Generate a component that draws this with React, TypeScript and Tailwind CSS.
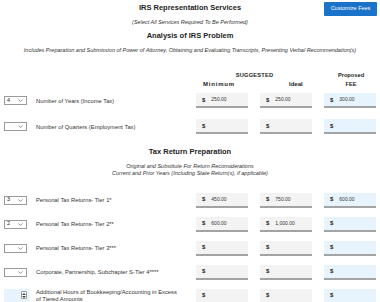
import React from "react";

type Row = {
  qty: string;
  label: string[];
  min: string;
  ideal: string;
  fee: string;
  spinner?: boolean;
};

const analysisRows: Row[] = [
  { qty: "4", label: ["Number of Years (Income Tax)"], min: "250.00", ideal: "250.00", fee: "300.00" },
  { qty: "", label: ["Number of Quarters (Employment Tax)"], min: "", ideal: "", fee: "" },
];

const returnRows: Row[] = [
  { qty: "3", label: ["Personal Tax Returns- Tier 1*"], min: "450.00", ideal: "750.00", fee: "600.00" },
  { qty: "2", label: ["Personal Tax Returns- Tier 2**"], min: "600.00", ideal: "1,000.00", fee: "" },
  { qty: "", label: ["Personal Tax Returns- Tier 3***"], min: "", ideal: "", fee: "" },
  { qty: "", label: ["Corporate, Partnership, Subchapter S-Tier 4****"], min: "", ideal: "", fee: "" },
  {
    qty: "",
    label: ["Additional Hours of Bookkeeping/Accounting in Excess", "of Tiered Amounts"],
    min: "",
    ideal: "",
    fee: "",
    spinner: true,
  },
];

function QtySelect({ value }: { value: string }) {
  return (
    <div className="flex h-[9px] w-[23px] items-center justify-between border border-[#9a9a9a] bg-white pl-[2px] pr-[2px]">
      <span className="text-[5.5px] leading-none text-[#222]">{value}</span>
      <svg width="5" height="3" viewBox="0 0 5 3" className="mr-[1px]">
        <path d="M0.5 0.5 L2.5 2.5 L4.5 0.5" fill="none" stroke="#666" strokeWidth="0.7" />
      </svg>
    </div>
  );
}

function Spinner() {
  return (
    <div className="flex h-[15px] w-[26px] items-center justify-end border-b-[2px] border-[#8c8c8c] bg-[#e8f4fd] pr-[3px]">
      <div className="flex h-[8px] w-[6px] flex-col items-center justify-center gap-[1px] rounded-[1px] border border-[#9a9a9a] bg-white">
        <svg width="4" height="2" viewBox="0 0 4 2">
          <path d="M0 2 L2 0 L4 2 Z" fill="#444" />
        </svg>
        <svg width="4" height="2" viewBox="0 0 4 2">
          <path d="M0 0 L2 2 L4 0 Z" fill="#444" />
        </svg>
      </div>
    </div>
  );
}

function MoneyInput({ value, fee }: { value: string; fee?: boolean }) {
  return (
    <div
      className={
        "flex h-[15px] w-[52px] items-center border-b-[2px] border-[#a3a3a3] pl-[6px] " +
        (fee ? "bg-[#e8f4fd]" : "bg-[#f3f3f3]")
      }
    >
      <span className="text-[6px] font-bold leading-none text-[#222]">$</span>
      <span className="ml-[6px] text-[5px] leading-none text-[#333]">{value}</span>
    </div>
  );
}

function FeeRow({ row }: { row: Row }) {
  return (
    <div className="flex items-center">
      <div className="flex w-[196px] items-center pl-[4px]">
        {row.spinner ? <Spinner /> : <QtySelect value={row.qty} />}
        <div
          className={
            "text-[5.8px] text-[#333] " + (row.spinner ? "ml-[6px] leading-[7px]" : "ml-[9px] leading-[8px]")
          }
        >
          {row.label.map((l) => (
            <div key={l}>{l}</div>
          ))}
        </div>
      </div>
      <div className="flex gap-[12px]">
        <MoneyInput value={row.min} />
        <MoneyInput value={row.ideal} />
        <MoneyInput value={row.fee} fee />
      </div>
    </div>
  );
}

export default function App() {
  return (
    <div className="h-[302px] w-[380px] overflow-hidden bg-white font-['Liberation_Sans',Arial,sans-serif] text-[#222]">
      <div className="relative pt-[3px]">
        <h1 className="text-center text-[7.5px] font-bold leading-[10px]">IRS Representation Services</h1>
        <button className="absolute right-[3px] top-[2px] h-[14px] w-[53px] rounded-[1px] bg-[#1a73c9] text-[5.5px] leading-none text-white">
          Customize Fees
        </button>
      </div>
      <p className="mt-[6px] text-center text-[5.5px] italic leading-[7px] text-[#333]">
        (Select All Services Required To Be Performed)
      </p>
      <h2 className="mt-[5px] text-center text-[7.5px] font-bold leading-[10px]">Analysis of IRS Problem</h2>
      <p className="mt-[6px] text-center text-[5.5px] italic leading-[7px] text-[#333]">
        Includes Preparation and Submission of Power of Attorney, Obtaining and Evaluating Transcripts, Presenting Verbal
        Recommendation(s)
      </p>

      <div className="mt-[18px] flex font-bold leading-[7px] text-[#222]">
        <div className="w-[196px]" />
        <div className="flex w-[116px] flex-col">
          <div className="pl-[1px] text-center text-[5.7px] tracking-[0.2px]">SUGGESTED</div>
          <div className="mt-[2px] flex text-[6px]">
            <div className="w-[52px] pl-[7px] tracking-[0.8px]">Minimum</div>
            <div className="ml-[12px] w-[52px] pl-[29px]">Ideal</div>
          </div>
        </div>
        <div className="ml-[12px] flex w-[52px] flex-col items-center text-[5.7px]">
          <div className="pl-[2px]">Proposed</div>
          <div className="mt-[2px] pl-[2px]">FEE</div>
        </div>
      </div>

      <div className="mt-[5px] flex flex-col gap-[11px]">
        {analysisRows.map((r) => (
          <FeeRow key={r.label[0]} row={r} />
        ))}
      </div>

      <h2 className="mt-[13px] text-center text-[7.5px] font-bold leading-[10px]">Tax Return Preparation</h2>
      <div className="mt-[5.5px] text-center text-[5.5px] italic leading-[7px] text-[#333]">
        <div>Original and Substitute For Return Reconsiderations</div>
        <div>Current and Prior Years (Including State Return(s), if applicable)</div>
      </div>

      <div className="mt-[16px] flex flex-col gap-[9px]">
        {returnRows.map((r) => (
          <FeeRow key={r.label[0]} row={r} />
        ))}
      </div>
    </div>
  );
}
